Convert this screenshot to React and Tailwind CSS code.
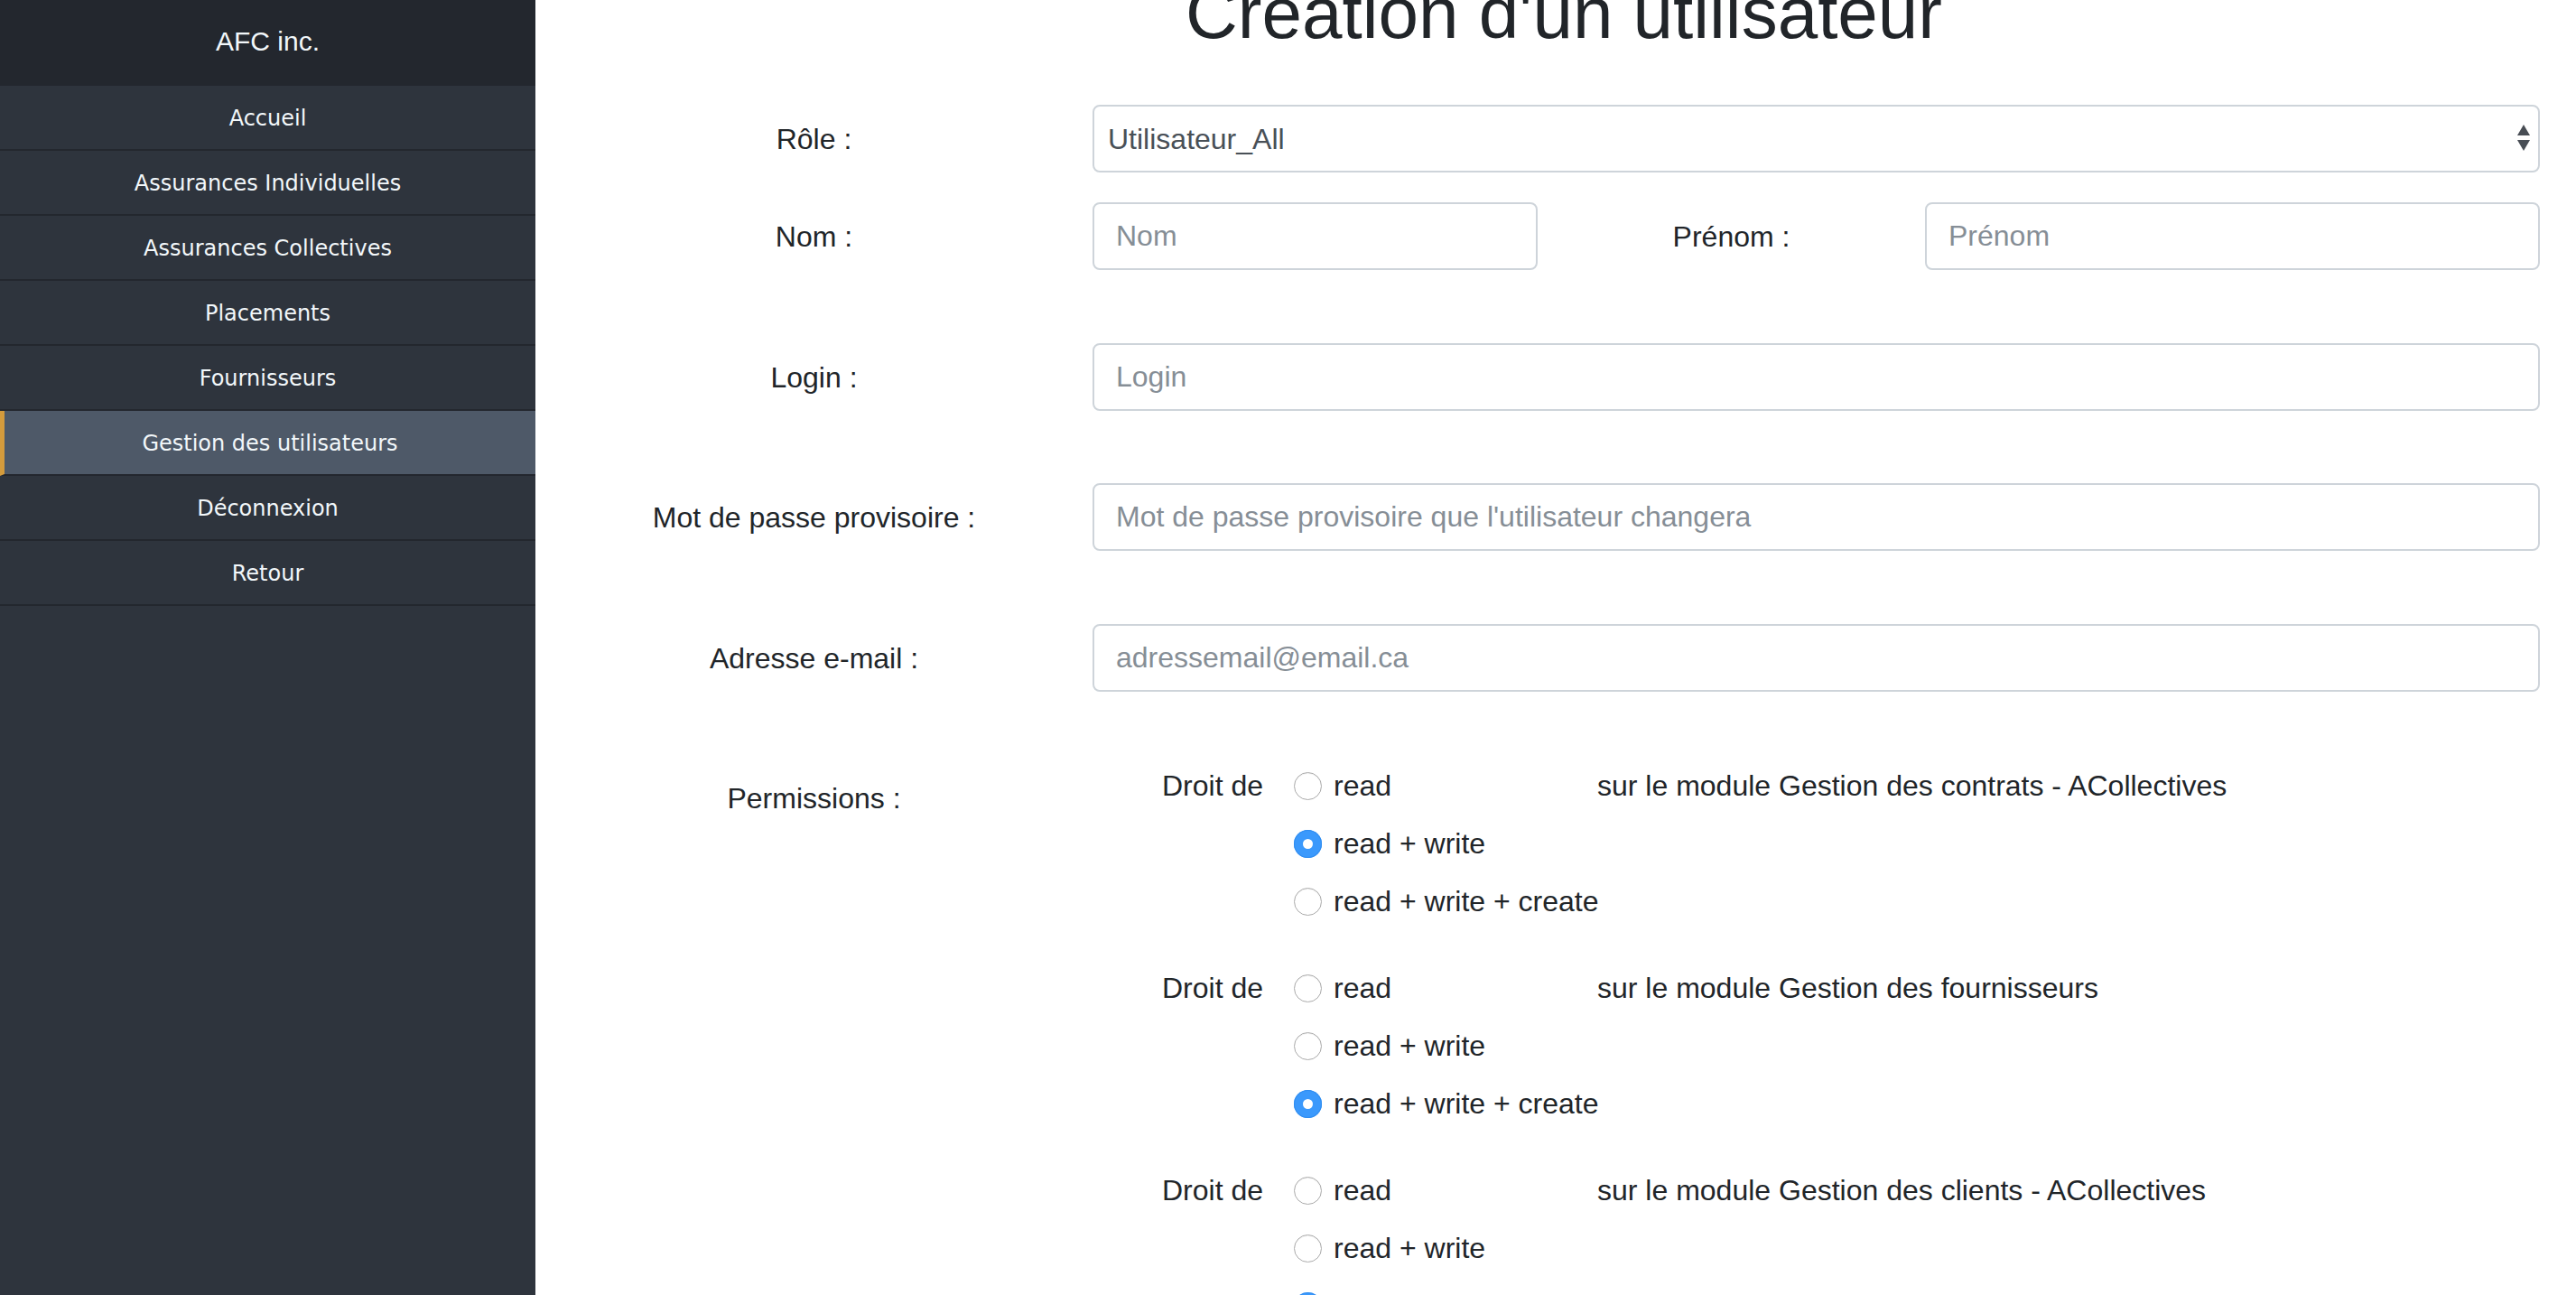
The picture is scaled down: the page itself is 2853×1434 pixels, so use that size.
import { useState } from 'react';

const navItems = [
  'Accueil',
  'Assurances Individuelles',
  'Assurances Collectives',
  'Placements',
  'Fournisseurs',
  'Gestion des utilisateurs',
  'Déconnexion',
  'Retour',
];

const levels = ['read', 'read + write', 'read + write + create'];

const initialPermissions = [
  { module: 'Gestion des contrats - ACollectives', value: 1 },
  { module: 'Gestion des fournisseurs', value: 2 },
  { module: 'Gestion des clients - ACollectives', value: 2 },
];

const Radio = ({ checked }) =>
  checked ? (
    <span className="flex h-[31px] w-[31px] shrink-0 items-center justify-center rounded-full bg-[#3b99fc] shadow-[inset_0_0_0_1px_#2f8cf0]">
      <span className="h-[11px] w-[11px] rounded-full bg-white" />
    </span>
  ) : (
    <span className="h-[31px] w-[31px] shrink-0 rounded-full border-[1.5px] border-[#ababab] bg-white shadow-[inset_0_1px_1px_rgba(0,0,0,0.06)]" />
  );

const Field = ({ placeholder }) => (
  <input
    type="text"
    placeholder={placeholder}
    className="h-[75px] w-full rounded-[8px] border-2 border-[#ced4da] bg-white px-[24px] text-[32px] text-[#495057] outline-none placeholder:text-[#868e96]"
  />
);

const Row = ({ label, className = '', children }) => (
  <div className={`grid grid-cols-[617px_1fr] items-center ${className}`}>
    <label className="text-center leading-[48px]">{label}</label>
    {children}
  </div>
);

const Sidebar = () => (
  <aside className="flex w-[593px] shrink-0 flex-col bg-[#2e343d] font-['DejaVu_Sans',Verdana,sans-serif] text-[24px] text-[#f2f7fa]">
    <div className="flex h-[95px] items-center justify-center bg-[#23272e] pb-[4px] font-['Liberation_Sans',Arial,sans-serif] text-[30px]">
      AFC inc.
    </div>
    {navItems.map((item) => {
      const active = item === 'Gestion des utilisateurs';
      return (
        <a
          key={item}
          href="#"
          className={`flex h-[72px] items-center justify-center border-b-2 border-[#23272e] pt-[2px] ${
            active ? 'border-l-[5px] border-l-[#d49b3c] bg-[#4e5968]' : ''
          }`}
        >
          {item}
        </a>
      );
    })}
  </aside>
);

export default function App() {
  const [perms, setPerms] = useState(initialPermissions);

  const pick = (i, value) =>
    setPerms((p) => p.map((x, j) => (j === i ? { ...x, value } : x)));

  return (
    <div className="flex h-[1434px] overflow-hidden bg-white">
      <Sidebar />

      <main className="flex-1 pr-[40px] font-['Liberation_Sans',Arial,sans-serif] text-[32px] text-[#212529]">
        <h1 className="mt-[-33px] h-[96px] whitespace-nowrap pl-[58px] text-center text-[80px] leading-[96px] font-medium">
          Création d'un utilisateur
        </h1>

        <form className="mt-[53px]">
          <Row label="Rôle :">
            <div className="flex h-[75px] items-center justify-between rounded-[8px] border-2 border-[#ced4da] bg-white pl-[15px] pr-[8px] text-[#495057]">
              <span>Utilisateur_All</span>
              <svg width="16" height="30" viewBox="0 0 16 30" className="mt-[-2px]">
                <polygon points="8,0 15,12 1,12" fill="#484d54" />
                <polygon points="1,17 15,17 8,29" fill="#484d54" />
              </svg>
            </div>
          </Row>

          <Row label="Nom :" className="mt-[33px]">
            <div className="grid grid-cols-[493px_1fr_681px] items-center">
              <Field placeholder="Nom" />
              <label className="text-center">Prénom :</label>
              <Field placeholder="Prénom" />
            </div>
          </Row>

          <Row label="Login :" className="mt-[81px]">
            <Field placeholder="Login" />
          </Row>

          <Row label="Mot de passe provisoire :" className="mt-[80px]">
            <Field placeholder="Mot de passe provisoire que l'utilisateur changera" />
          </Row>

          <Row label="Adresse e-mail :" className="mt-[81px]">
            <Field placeholder="adressemail@email.ca" />
          </Row>

          <div className="mt-[80px] grid grid-cols-[617px_1fr] items-start">
            <span className="mt-[14px] text-center leading-[48px]">Permissions :</span>
            <div className="flex flex-col gap-[48px]">
              {perms.map((perm, i) => (
                <div key={perm.module} className="flex items-start whitespace-nowrap leading-[48px]">
                  <span className="ml-[77px] w-[146px] shrink-0">Droit de</span>
                  <div className="flex w-[336px] shrink-0 flex-col gap-[16px]">
                    {levels.map((lvl, v) => (
                      <div
                        key={lvl}
                        onClick={() => pick(i, v)}
                        className="flex h-[48px] cursor-pointer items-center gap-[13px]"
                      >
                        <Radio checked={perm.value === v} />
                        <span className="whitespace-nowrap">{lvl}</span>
                      </div>
                    ))}
                  </div>
                  <span>sur le module {perm.module}</span>
                </div>
              ))}
            </div>
          </div>
        </form>
      </main>
    </div>
  );
}
